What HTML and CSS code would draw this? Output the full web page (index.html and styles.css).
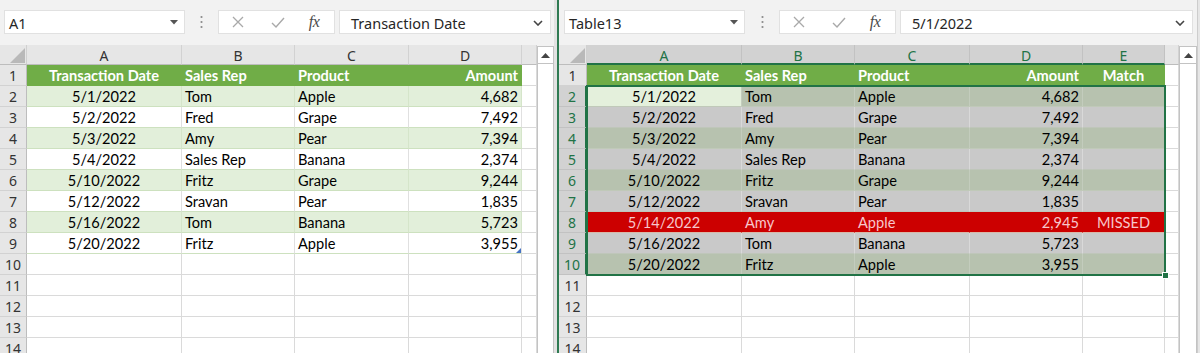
FILE: index.html
```html
<!DOCTYPE html>
<html>
<head>
<meta charset="utf-8">
<link rel="stylesheet" href="styles.css">
</head>
<body>
<div class="app">
  <div class="pane left">
    <div class="fbar">
      <div class="namebox"><span>A1</span><svg class="tri" width="8" height="5" viewBox="0 0 8 5"><polygon points="0,0 8,0 4,4.5" fill="#555"/></svg></div>
      <div class="dots"><svg width="3" height="14" viewBox="0 0 3 14"><circle cx="1.5" cy="2" r="1.1" fill="#8a8a8a"/><circle cx="1.5" cy="7" r="1.1" fill="#8a8a8a"/><circle cx="1.5" cy="12" r="1.1" fill="#8a8a8a"/></svg></div>
      <div class="btns">
        <span class="b1"><svg width="12" height="12" viewBox="0 0 12 12"><path d="M1 1L11 11M11 1L1 11" stroke="#a9a9a9" stroke-width="1.3" fill="none"/></svg></span>
        <span class="b2"><svg width="14" height="11" viewBox="0 0 14 11"><path d="M1 6L5 10L13 1" stroke="#a9a9a9" stroke-width="1.4" fill="none"/></svg></span>
        <span class="b3 fx">fx</span>
      </div>
      <div class="formula"><span>Transaction Date</span><svg width="10" height="6" viewBox="0 0 10 6"><path d="M1 1L5 5L9 1" stroke="#444" stroke-width="1.6" fill="none"/></svg></div>
    </div>
    <div class="body">
      <div class="grid">
        <div class="row"><div class="corner"><svg width="27" height="20" viewBox="0 0 27 20"><polygon points="25,3 25,18 10,18" fill="#b9b9b9"/></svg></div><div class="ch">A</div><div class="ch">B</div><div class="ch">C</div><div class="ch">D</div><div class="ch"></div></div>
        <div class="row th"><div class="rh">1</div><div class="c t ctr">Transaction Date</div><div class="c t">Sales Rep</div><div class="c t">Product</div><div class="c t rt">Amount</div><div class="c"></div></div>
        <div class="row band"><div class="rh">2</div><div class="c t ctr">5/1/2022</div><div class="c t">Tom</div><div class="c t">Apple</div><div class="c t rt">4,682</div><div class="c"></div></div>
        <div class="row wt"><div class="rh">3</div><div class="c t ctr">5/2/2022</div><div class="c t">Fred</div><div class="c t">Grape</div><div class="c t rt">7,492</div><div class="c"></div></div>
        <div class="row band"><div class="rh">4</div><div class="c t ctr">5/3/2022</div><div class="c t">Amy</div><div class="c t">Pear</div><div class="c t rt">7,394</div><div class="c"></div></div>
        <div class="row wt"><div class="rh">5</div><div class="c t ctr">5/4/2022</div><div class="c t">Sales Rep</div><div class="c t">Banana</div><div class="c t rt">2,374</div><div class="c"></div></div>
        <div class="row band"><div class="rh">6</div><div class="c t ctr">5/10/2022</div><div class="c t">Fritz</div><div class="c t">Grape</div><div class="c t rt">9,244</div><div class="c"></div></div>
        <div class="row wt"><div class="rh">7</div><div class="c t ctr">5/12/2022</div><div class="c t">Sravan</div><div class="c t">Pear</div><div class="c t rt">1,835</div><div class="c"></div></div>
        <div class="row band"><div class="rh">8</div><div class="c t ctr">5/16/2022</div><div class="c t">Tom</div><div class="c t">Banana</div><div class="c t rt">5,723</div><div class="c"></div></div>
        <div class="row wt"><div class="rh">9</div><div class="c t ctr">5/20/2022</div><div class="c t">Fritz</div><div class="c t">Apple</div><div class="c t rt handle">3,955</div><div class="c"></div></div>
        <div class="row"><div class="rh">10</div><div class="c"></div><div class="c"></div><div class="c"></div><div class="c"></div><div class="c"></div></div>
        <div class="row"><div class="rh">11</div><div class="c"></div><div class="c"></div><div class="c"></div><div class="c"></div><div class="c"></div></div>
        <div class="row"><div class="rh">12</div><div class="c"></div><div class="c"></div><div class="c"></div><div class="c"></div><div class="c"></div></div>
        <div class="row"><div class="rh">13</div><div class="c"></div><div class="c"></div><div class="c"></div><div class="c"></div><div class="c"></div></div>
        <div class="row"><div class="rh">14</div><div class="c"></div><div class="c"></div><div class="c"></div><div class="c"></div><div class="c"></div></div>
      </div>
      <div class="vscroll"><div class="up"><svg width="9" height="5" viewBox="0 0 9 5"><polygon points="0,5 9,5 4.5,0" fill="#444"/></svg></div></div>
    </div>
  </div>
  <div class="divider"><div class="g"></div><div class="gr"></div></div>
  <div class="pane right">
    <div class="fbar">
      <div class="namebox"><span>Table13</span><svg class="tri" width="8" height="5" viewBox="0 0 8 5"><polygon points="0,0 8,0 4,4.5" fill="#555"/></svg></div>
      <div class="dots"><svg width="3" height="14" viewBox="0 0 3 14"><circle cx="1.5" cy="2" r="1.1" fill="#8a8a8a"/><circle cx="1.5" cy="7" r="1.1" fill="#8a8a8a"/><circle cx="1.5" cy="12" r="1.1" fill="#8a8a8a"/></svg></div>
      <div class="btns">
        <span class="b1"><svg width="12" height="12" viewBox="0 0 12 12"><path d="M1 1L11 11M11 1L1 11" stroke="#a9a9a9" stroke-width="1.3" fill="none"/></svg></span>
        <span class="b2"><svg width="14" height="11" viewBox="0 0 14 11"><path d="M1 6L5 10L13 1" stroke="#a9a9a9" stroke-width="1.4" fill="none"/></svg></span>
        <span class="b3 fx">fx</span>
      </div>
      <div class="formula"><span>5/1/2022</span><svg width="10" height="6" viewBox="0 0 10 6"><path d="M1 1L5 5L9 1" stroke="#444" stroke-width="1.6" fill="none"/></svg></div>
    </div>
    <div class="body">
      <div class="grid">
        <div class="row"><div class="corner"><svg width="28" height="20" viewBox="0 0 28 20"><polygon points="26,3 26,18 11,18" fill="#b9b9b9"/></svg></div><div class="ch hsel">A</div><div class="ch hsel">B</div><div class="ch hsel">C</div><div class="ch hsel">D</div><div class="ch hsel">E</div><div class="ch"></div></div>
        <div class="row th"><div class="rh">1</div><div class="c t ctr">Transaction Date</div><div class="c t">Sales Rep</div><div class="c t">Product</div><div class="c t rt">Amount</div><div class="c t ctr">Match</div><div class="c"></div></div>
        <div class="row band sel"><div class="rh rsel">2</div><div class="c t ctr act">5/1/2022</div><div class="c t">Tom</div><div class="c t">Apple</div><div class="c t rt">4,682</div><div class="c t"></div><div class="c"></div></div>
        <div class="row wt sel"><div class="rh rsel">3</div><div class="c t ctr">5/2/2022</div><div class="c t">Fred</div><div class="c t">Grape</div><div class="c t rt">7,492</div><div class="c t"></div><div class="c"></div></div>
        <div class="row band sel"><div class="rh rsel">4</div><div class="c t ctr">5/3/2022</div><div class="c t">Amy</div><div class="c t">Pear</div><div class="c t rt">7,394</div><div class="c t"></div><div class="c"></div></div>
        <div class="row wt sel"><div class="rh rsel">5</div><div class="c t ctr">5/4/2022</div><div class="c t">Sales Rep</div><div class="c t">Banana</div><div class="c t rt">2,374</div><div class="c t"></div><div class="c"></div></div>
        <div class="row band sel"><div class="rh rsel">6</div><div class="c t ctr">5/10/2022</div><div class="c t">Fritz</div><div class="c t">Grape</div><div class="c t rt">9,244</div><div class="c t"></div><div class="c"></div></div>
        <div class="row wt sel"><div class="rh rsel">7</div><div class="c t ctr">5/12/2022</div><div class="c t">Sravan</div><div class="c t">Pear</div><div class="c t rt">1,835</div><div class="c t"></div><div class="c"></div></div>
        <div class="row red sel"><div class="rh rsel">8</div><div class="c t ctr">5/14/2022</div><div class="c t">Amy</div><div class="c t">Apple</div><div class="c t rt">2,945</div><div class="c t ctr">MISSED</div><div class="c"></div></div>
        <div class="row wt sel"><div class="rh rsel">9</div><div class="c t ctr">5/16/2022</div><div class="c t">Tom</div><div class="c t">Banana</div><div class="c t rt">5,723</div><div class="c t"></div><div class="c"></div></div>
        <div class="row band sel"><div class="rh rsel">10</div><div class="c t ctr">5/20/2022</div><div class="c t">Fritz</div><div class="c t">Apple</div><div class="c t rt">3,955</div><div class="c t"></div><div class="c"></div></div>
        <div class="row"><div class="rh">11</div><div class="c"></div><div class="c"></div><div class="c"></div><div class="c"></div><div class="c"></div><div class="c"></div></div>
        <div class="row"><div class="rh">12</div><div class="c"></div><div class="c"></div><div class="c"></div><div class="c"></div><div class="c"></div><div class="c"></div></div>
        <div class="row"><div class="rh">13</div><div class="c"></div><div class="c"></div><div class="c"></div><div class="c"></div><div class="c"></div><div class="c"></div></div>
        <div class="row"><div class="rh">14</div><div class="c"></div><div class="c"></div><div class="c"></div><div class="c"></div><div class="c"></div><div class="c"></div></div>
        <div class="selbox"><span class="fill"></span></div>
      </div>
      <div class="vscroll"><div class="up"><svg width="9" height="5" viewBox="0 0 9 5"><polygon points="0,5 9,5 4.5,0" fill="#444"/></svg></div></div>
    </div>
  </div>
  <div class="edge"></div>
</div>
</body>
</html>
```

FILE: styles.css
```css
* { box-sizing: border-box; }
html, body { margin: 0; padding: 0; }
body {
  width: 1200px;
  height: 353px;
  overflow: hidden;
  background: #e4e4e4;
  font-family: Lato, "Noto Sans", sans-serif;
  color: #000;
}
.app { display: flex; height: 353px; }
.pane { display: flex; flex-direction: column; background: #f2f2f2; height: 353px; }
.pane.left { width: 554px; }
.pane.right { width: 638px; }
.divider { width: 5px; display: flex; }
.divider .g { flex: 1; background: #e2e2e2; }
.divider .gr { width: 2px; background: #2f7a52; }
.edge { flex: 1; background: #e6e6e6; border-left: 1px solid #cdcdcd; }

/* formula bar */
.fbar {
  height: 45px;
  flex: none;
  display: flex;
  align-items: flex-start;
  padding: 10px 0 0 4px;
  font-family: "Noto Sans", sans-serif;
  font-size: 14.5px;
  color: #262626;
}
.right .fbar { padding-left: 5px; }
.namebox {
  width: 181px;
  height: 24px;
  background: #fff;
  border: 1px solid #e1e1e1;
  display: flex;
  align-items: center;
  justify-content: space-between;
  padding: 1px 6px 0 4px;
}
.dots { width: 33px; height: 24px; display: flex; align-items: center; justify-content: center; }
.right .dots { width: 34px; }
.btns {
  width: 117px;
  height: 24px;
  background: #fff;
  border: 1px solid #e1e1e1;
  display: flex;
  align-items: center;
}
.btns span { display: flex; justify-content: center; align-items: center; height: 22px; }
.b1 { width: 38px; }
.b2 { width: 42px; }
.b3 { width: 30px; }
.fx {
  font-family: "Liberation Serif", "DejaVu Serif", serif;
  font-style: italic;
  font-size: 16px;
  color: #4a4a4a;
  letter-spacing: -0.5px;
}
.formula {
  flex: 1;
  margin: 0 3px 0 4px;
  height: 24px;
  background: #fff;
  border: 1px solid #e1e1e1;
  display: flex;
  align-items: center;
  justify-content: space-between;
  padding: 1px 7px 0 11px;
}
.right .formula { margin-right: 4px; }

/* sheet */
.body { flex: 1; display: flex; overflow: hidden; }
.grid {
  display: grid;
  grid-template-rows: 20px;
  grid-auto-rows: 21px;
  align-content: start;
  position: relative;
  background: #fff;
}
.left .grid { grid-template-columns: 27px 155px 113px 114px 113px 15px; }
.right .grid { grid-template-columns: 28px 155px 113px 115px 113px 82px 14px; }
.row { display: contents; }

.corner { background: #e6e6e6; border-right: 1px solid #d0d0d0; border-bottom: 1px solid #bdbdbd; }
.corner svg { display: block; }
.ch {
  background: #e6e6e6;
  border-right: 1px solid #d2d2d2;
  border-bottom: 1px solid #bdbdbd;
  font-family: "Noto Sans", sans-serif;
  font-size: 14px;
  color: #333;
  text-align: center;
  line-height: 22px;
  overflow: hidden;
}
.ch.hsel { background: #d2d2d2; color: #217346; border-bottom: 2px solid #217346; border-right-color: #c2c2c2; }
.rh {
  background: #e6e6e6;
  border-right: 1px solid #bdbdbd;
  border-bottom: 1px solid #d2d2d2;
  font-family: "Noto Sans", sans-serif;
  font-size: 14px;
  color: #333;
  text-align: center;
  line-height: 22px;
  overflow: hidden;
}
.rh.rsel { background: #d2d2d2; color: #217346; border-right: 2px solid #217346; border-bottom-color: #c2c2c2; }

.c {
  border-right: 1px solid #dadada;
  border-bottom: 1px solid #dadada;
  font-size: 14.6px;
  line-height: 22px;
  padding: 0 3px;
  white-space: nowrap;
  overflow: hidden;
  text-align: left;
}
.ctr { text-align: center; }
.rt { text-align: right; }

.th .t { background: #70ad47; color: #fff; font-weight: 700; border-right-color: #70ad47; border-bottom-color: #70ad47; }
.band .t { background: #e2efda; border-right-color: #d5e5ca; border-bottom-color: #cde1bf; }
.wt .t { background: #fff; border-right-color: #e0e0e0; border-bottom-color: #cde1bf; }

.sel.band .t { background: #b7c2af; border-right-color: #c3ccbd; border-bottom-color: #c0c9b9; }
.sel.wt .t { background: #c9c9c9; border-right-color: #d9d9d9; border-bottom-color: #bfc6ba; }
.sel.band .t.act { background: #e4f0dc; }
.sel.red .t { background: #cc0000; color: #f7c6cb; border-right-color: #cc0000; border-bottom-color: #d8b8a8; }

.handle { position: relative; }
.handle::after {
  content: "";
  position: absolute;
  right: 0;
  bottom: 0;
  border-style: solid;
  border-width: 0 0 5px 5px;
  border-color: transparent transparent #4472c4 transparent;
}

.selbox {
  position: absolute;
  left: 27px;
  top: 40px;
  width: 580px;
  height: 191px;
  border: 2px solid #217346;
  pointer-events: none;
}
.selbox .fill {
  position: absolute;
  right: -5px;
  bottom: -5px;
  width: 7px;
  height: 7px;
  background: #217346;
  border: 1px solid #fff;
}

.vscroll {
  width: 17px;
  flex: none;
  background: #fff;
  border-left: 1px solid #c3c3c3;
  border-right: 1px solid #c3c3c3;
  margin-top: 1px;
}
.right .vscroll { width: 18px; }
.up {
  height: 18px;
  border-bottom: 1px solid #c3c3c3;
  border-top: 1px solid #c3c3c3;
  display: flex;
  align-items: center;
  justify-content: center;
}
.up svg { display: block; }
```
